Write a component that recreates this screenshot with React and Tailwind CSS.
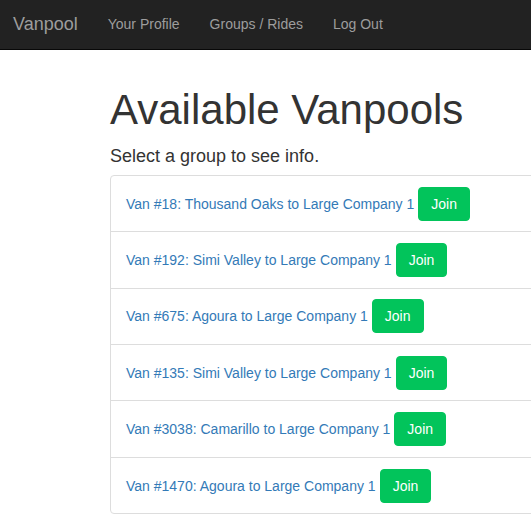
import React from "react";

const vans = [
  { id: 18, from: "Thousand Oaks" },
  { id: 192, from: "Simi Valley" },
  { id: 675, from: "Agoura" },
  { id: 135, from: "Simi Valley" },
  { id: 3038, from: "Camarillo" },
  { id: 1470, from: "Agoura" },
];

function App() {
  return (
    <div className="w-[531px] h-[531px] overflow-hidden bg-white font-['Liberation_Sans',Arial,sans-serif] text-[#333]">
      {/* navbar */}
      <nav className="h-[50px] pb-[2px] bg-[#222] border-b border-[#080808] flex items-center text-[#9d9d9d]">
        <a href="#" className="pl-[13px] pr-[15px] text-[18px] leading-[20px]">Vanpool</a>
        <a href="#" className="px-[15px] text-[14px] leading-[20px]">Your Profile</a>
        <a href="#" className="px-[15px] text-[14px] leading-[20px]">Groups / Rides</a>
        <a href="#" className="px-[15px] text-[14px] leading-[20px]">Log Out</a>
      </nav>

      <div className="pl-[110px]">
        <h1 className="mt-[37px] text-[42px] leading-[1.1] whitespace-nowrap">Available Vanpools</h1>
        <p className="mt-[11px] text-[18px] leading-[1.42857]">Select a group to see info.</p>

        <div className="mt-[5px] w-[480px] border border-[#ddd] rounded-[4px]">
          {vans.map((v, i) => (
            <div
              key={v.id}
              className={
                i === 0
                  ? "h-[55.4px] flex items-center px-[15px] text-[14px]"
                  : "h-[56.4px] flex items-center px-[15px] text-[14px] border-t border-[#ddd]"
              }
            >
              <a href="#" className="text-[#337ab7] leading-[20px] whitespace-nowrap">
                Van #{v.id}: {v.from} to Large Company 1
              </a>
              <button className="ml-[4px] h-[34px] px-[12px] border border-[#02c45b] rounded-[4px] bg-[#02c45b] text-white text-[14px] leading-[20px]">
                Join
              </button>
            </div>
          ))}
        </div>
      </div>
    </div>
  );
}

export default App;
